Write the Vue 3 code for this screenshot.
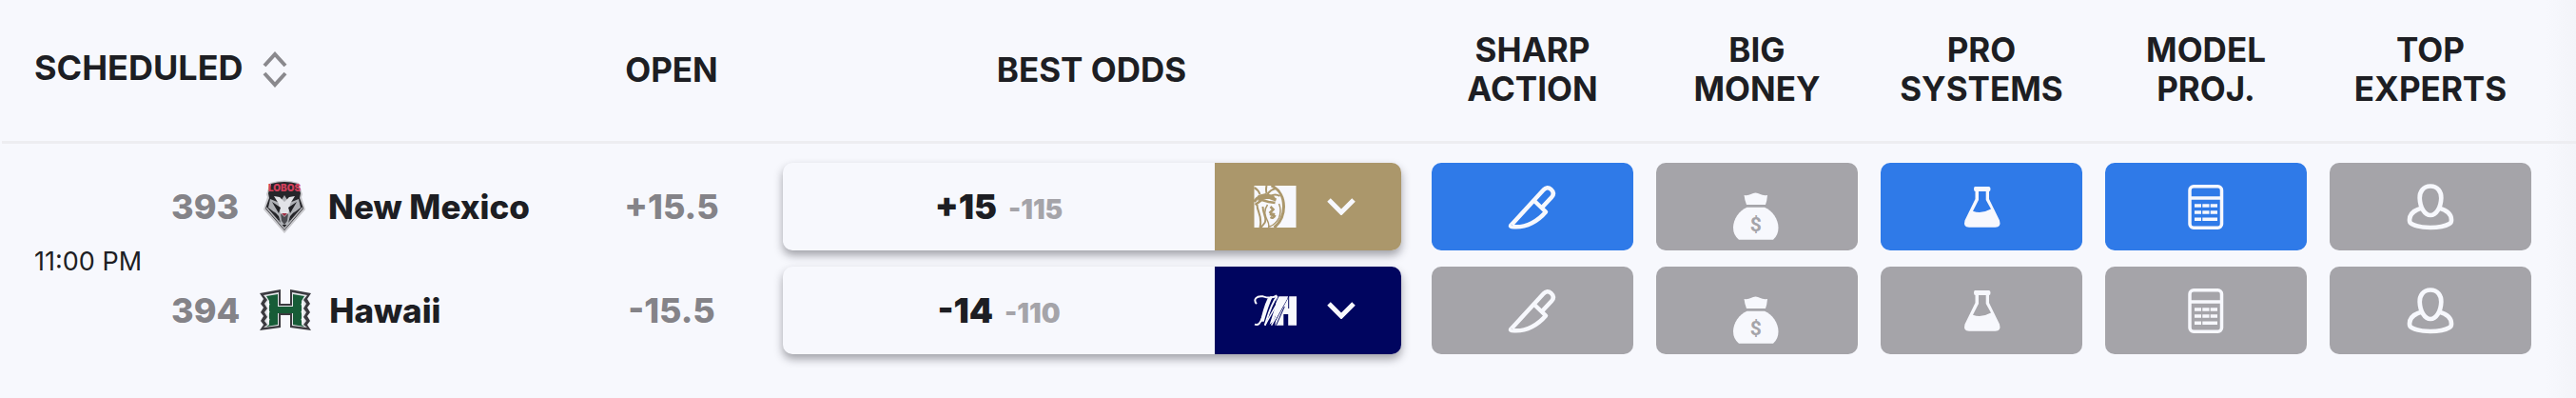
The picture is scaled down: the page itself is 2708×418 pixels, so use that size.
<script setup>
const signals = [
  { key: 'sharp', lines: ['SHARP', 'ACTION'], label: 'Sharp action' },
  { key: 'money', lines: ['BIG', 'MONEY'], label: 'Big money' },
  { key: 'systems', lines: ['PRO', 'SYSTEMS'], label: 'Pro systems' },
  { key: 'model', lines: ['MODEL', 'PROJ.'], label: 'Model projection' },
  { key: 'experts', lines: ['TOP', 'EXPERTS'], label: 'Top experts' },
]

const teams = [
  { id: 393, name: 'New Mexico', open: '+15.5', line: '+15', price: '-115', book: 'mgm', active: ['sharp', 'systems', 'model'] },
  { id: 394, name: 'Hawaii', open: '-15.5', line: '-14', price: '-110', book: 'hill', active: [] },
]
</script>

<template>
  <main class="board">
    <table class="odds">
      <colgroup>
        <col class="c-time" />
        <col />
        <col class="c-open" />
        <col class="c-best" />
        <col v-for="s in signals" :key="s.key" class="c-signal" />
        <col class="c-end" />
      </colgroup>
      <thead>
        <tr>
          <th colspan="2" scope="col" class="scheduled">
            <button type="button" class="sort">
              SCHEDULED
              <svg class="sort-icon" viewBox="0 0 26 38" aria-hidden="true">
                <path d="M2 15 13 3 24 15M2 23 13 35 24 23" fill="none" stroke="currentColor" stroke-width="4" />
              </svg>
            </button>
          </th>
          <th scope="col">OPEN</th>
          <th scope="col">BEST ODDS</th>
          <th v-for="s in signals" :key="s.key" scope="col">{{ s.lines[0] }}<br />{{ s.lines[1] }}</th>
          <td></td>
        </tr>
      </thead>
      <tbody>
        <tr v-for="(t, i) in teams" :key="t.id">
          <td v-if="i === 0" rowspan="2" class="time">11:00 PM</td>
          <td>
            <div class="team">
              <span class="number">{{ t.id }}</span>
              <span class="logo">
                <svg v-if="t.id === 393" class="lobos" viewBox="0 0 46 56" aria-hidden="true">
                  <path d="M8 3Q23-2 38 3L42 15 41 18 45 31 23 56 1 31 5 18 4 15Z" fill="#c9c9cd" />
                  <path d="M9 4Q23 0 37 4L40 14 39 19 43 30 23 53 3 30 7 19 6 14Z" fill="#26262a" />
                  <path d="M4 29 23 51 42 29" fill="none" stroke="#b4b4b8" stroke-width="1.5" />
                  <path d="M8 20 18 24 23 16 28 24 38 20 40 29 31 36 27 47H19L15 36 6 29Z" fill="#aeb0b5" />
                  <path d="M12 17 18 18 23 23 28 18 34 17 29 25 27 36H19L17 25Z" fill="#e2e3e7" />
                  <path d="M10 23 19 29 17 35ZM36 23 27 29 29 35ZM12 33 17 38 19 45ZM34 33 29 38 27 45Z" fill="#202024" />
                  <path d="M19 35 23 39 27 35 26 43 23 47 20 43Z" fill="#4b4b50" />
                  <path d="M20 35H26L23 38Z" fill="#9e2b40" />
                  <text x="23" y="12" text-anchor="middle" class="lobos-word">LOBOS</text>
                </svg>
                <svg v-else class="hawaii" viewBox="0 0 56 44" aria-hidden="true">
                  <path d="M1 4 23 0V15H33V0L55 4 51 10 54 15 51 19 54 24 51 28 54 33 51 37 55 43 33 40V27H23V40L1 43 5 37 2 33 5 28 2 24 5 19 2 15 5 10Z" fill="#3b3a3f" />
                  <path d="M5 6 21 3V17H35V3L51 6 47 11 50 15 47 20 50 24 47 29 50 33 47 37 51 40 35 38V25H21V38L5 40 9 37 6 33 9 29 6 24 9 20 6 15 9 11Z" fill="#e4e6e9" />
                  <path d="M8 7 20 5V18H36V5L48 7 45 12V37L48 39 36 37V25H20V37L8 39 11 37V12Z" fill="#175c37" />
                  <path d="M9 13Q14 15 9 19ZM9 21Q14 23 9 27ZM9 29Q14 31 9 35ZM47 13Q42 15 47 19ZM47 21Q42 23 47 27ZM47 29Q42 31 47 35Z" fill="#f7f8fd" />
                </svg>
              </span>
              <span class="name">{{ t.name }}</span>
            </div>
          </td>
          <td class="open">{{ t.open }}</td>
          <td class="best">
            <div class="best-box">
              <button type="button" class="quote">
                <span class="line">{{ t.line }}</span>
                <span class="price">{{ t.price }}</span>
              </button>
              <button type="button" class="book" :class="t.book" :aria-label="`Choose sportsbook for ${t.name}`" aria-haspopup="listbox">
                <svg v-if="t.book === 'mgm'" class="book-logo" viewBox="0 0 44 44" aria-hidden="true">
                  <path d="M0 0H44V44H0Z" fill="#f7f8fd" />
                  <g fill="none" stroke="#ab976b">
                    <path d="M18 0C27 4 31 13 31 22C31 32 27 39 21 44" stroke-width="3" />
                    <path d="M0 2Q4 4 6 9M13 0Q12 4 13 8M23 3Q17 4 14 9M27 11Q22 8 17 11" stroke-width="2" />
                    <path d="M3 20C3 28 9 31 6 44M9 22C9 30 14 34 11 39L7 44" stroke-width="2" />
                    <path d="M14 20C9 27 12 33 14 37Q16 41 15 44M26 19Q29 26 26 34Q22 41 16 43" stroke-width="1.5" />
                    <path d="M0 17Q4 10 12 11L23 15" stroke-width="3" />
                    <path d="M1 20 8 15 15 17 22 18M17 22 20 25 16 29M17 33Q20 35 22 31" stroke-width="2.5" />
                  </g>
                  <path d="M4 10 12 8 20 10 23 14 13 14 4 16ZM17 28 22 29 21 33 16 31Z" fill="#ab976b" />
                </svg>
                <svg v-else class="book-logo" viewBox="0 0 46 44" aria-hidden="true">
                  <path d="M24 7H37V20H38V7H46V38H37V26H32V38H23Z" fill="#f7f8fd" />
                  <path d="M27 6 11 39M38 6 20 39M33 18 24 38" stroke="#00055f" stroke-width="1" />
                  <path d="M3 15C-1 10 3 6 10 7Q19 10 25 6M19 7C13 14 11 30 6 36Q4 38 1 37M25 7C18 16 15 29 12 38" fill="none" stroke="#f7f8fd" stroke-width="2" />
                  <path d="M15 9C11 17 9 26 7 34L11 34C13 27 16 17 20 8ZM25 12 17 37 21 34 26 21Z" fill="#f7f8fd" />
                  <path d="M12 38 26 13M19 38 36 8" fill="none" stroke="#f7f8fd" stroke-width="1.5" />
                </svg>
                <svg class="chevron" viewBox="0 0 30 18" aria-hidden="true">
                  <path d="M2 2 15 15 28 2" fill="none" stroke="currentColor" stroke-width="5" />
                </svg>
              </button>
            </div>
          </td>
          <td v-for="s in signals" :key="s.key" class="signal-cell">
            <button type="button" class="signal" :class="{ on: t.active.includes(s.key) }" :aria-label="`${s.label}: ${t.name}`">
              <svg viewBox="0 0 48 48" class="icon" aria-hidden="true">
                <g v-if="s.key === 'sharp'" fill="none" stroke="currentColor" stroke-width="4.5" stroke-linejoin="round">
                  <path d="M2 43 35.5 6.5C38 3.5 41 3.5 43.5 5.8C46.5 8.5 46.5 11.5 44 14.3L33.5 25.5" />
                  <path d="M26 18 38 29.5C30 39 18 46 5 45.3C1 45 0 44.5 2 43" />
                </g>
                <g v-else-if="s.key === 'money'" fill="currentColor">
                  <path d="M10.5 12Q15 12.5 17.5 11Q22.5 8 27.5 11Q30 12.5 35 12Q34.5 18 33 22H13Q11 17 10.5 12Z" />
                  <path d="M13.5 24.7H32C40 28 46.5 37 46.5 46Q46.5 54 41 58.7H5Q-1 54-1 46C-1 37 5.5 28 13.5 24.7Z" />
                  <text x="22.7" y="49.5" text-anchor="middle" class="dollar">$</text>
                </g>
                <path v-else-if="s.key === 'systems'" fill="currentColor" fill-rule="evenodd" d="M17 3H32Q33.5 3 33.5 5.5T32 8V16L43 38.5Q45 45.7 38.5 45.7H11Q4.5 45.7 6.5 38.5L17.5 16V8Q16 8 16 5.5T17 3ZM21 8V17L15 28.7Q24 32 34 26.5L28.7 17V8Z" />
                <g v-else-if="s.key === 'model'" fill="none" stroke="currentColor" stroke-width="3.5">
                  <rect x="7" y="2.7" width="33.5" height="43.5" rx="4" />
                  <path d="M7 15H40" />
                  <path d="M12 23H19M20.3 23H27.5M28.7 23H36M12 30H19M20.3 30H27.5M28.7 30H36M12 37.3H19M20.3 37.3H36" />
                </g>
                <g v-else fill="none" stroke="currentColor" stroke-width="4.7">
                  <path d="M24 2.5C16 2.5 12.5 9 12.7 15C13 25 18 33 24 33S35 25 35.3 15C35.5 9 32 2.5 24 2.5Z" />
                  <path d="M15 25.5C6 28 2 33 2 38C2 40 2 41 4 42Q11 46 24 46T44 42C46 41 46 40 46 38C46 33 42 28 33 25.5" />
                </g>
              </svg>
            </button>
          </td>
          <td></td>
        </tr>
      </tbody>
    </table>
  </main>
</template>

<style>
body {
  background: #f7f8fd;
}
</style>

<style scoped>
.board {
  min-height: 100vh;
  padding-left: 2px;
  box-sizing: border-box;
  overflow-x: auto;
  background: linear-gradient(to left, #f3f4f9, #f7f8fd 32px);
  color: #1d1e23;
  font-family: Inter, "Liberation Sans", sans-serif;
}
.odds {
  width: 100%;
  min-width: 2600px;
  table-layout: fixed;
  border-collapse: separate;
  border-spacing: 0;
}
.c-time { width: 178px; }
.c-open { width: 192px; }
.c-best { width: 691px; }
.c-signal { width: 236px; }
.c-end { width: 35px; }
th,
td {
  padding: 0;
}
thead th,
thead td {
  height: 146px;
  padding-bottom: 2px;
  border-bottom: 3px solid #ededf1;
  font-size: 35px;
  font-weight: 700;
  line-height: 41px;
  text-align: center;
}
thead .scheduled {
  height: 142px;
  padding: 0 0 6px 34px;
  font-size: 36px;
  text-align: left;
}
button {
  margin: 0;
  padding: 0;
  border: 0;
  background: none;
  color: inherit;
  font: inherit;
  cursor: pointer;
}
.sort {
  display: flex;
  align-items: flex-end;
  gap: 20px;
}
.sort-icon {
  width: 26px;
  height: 38px;
  color: #8a898d;
}
tbody td {
  padding: 9px 0 25px;
}
tbody tr:first-child td {
  padding: 20px 0 8px;
}
tbody tr td.time {
  padding: 0 0 0 34px;
  font-size: 27px;
  white-space: nowrap;
}
.team {
  display: flex;
  align-items: center;
}
.number {
  min-width: 70px;
  color: #848388;
  font-size: 36px;
  font-weight: 800;
}
.logo {
  display: flex;
  justify-content: center;
  width: 56px;
  margin: 0 18px 0 20px;
}
.lobos {
  width: 46px;
  height: 56px;
}
.lobos-word {
  fill: #d2405c;
  font-size: 10px;
  font-weight: 900;
}
.hawaii {
  width: 56px;
  height: 44px;
}
.name {
  font-size: 35px;
  font-weight: 800;
  white-space: nowrap;
}
.open {
  color: #848388;
  font-size: 36px;
  font-weight: 800;
  text-align: center;
}
tbody tr td.best {
  padding-left: 21px;
  padding-right: 20px;
}
.best-box {
  display: flex;
  height: 92px;
  border-radius: 10px;
  background: #f7f8fd;
  box-shadow: 0 5px 10px rgba(30, 30, 40, 0.4);
  overflow: hidden;
}
.quote {
  display: flex;
  flex: 1;
  align-items: baseline;
  align-self: center;
  justify-content: center;
  gap: 12px;
}
.line {
  font-size: 36px;
  font-weight: 900;
}
.price {
  color: #a5a4a9;
  font-size: 28px;
  font-weight: 900;
}
.book {
  display: flex;
  align-items: center;
  width: 196px;
  padding-left: 41px;
  gap: 32px;
  color: #f7f8fd;
}
.mgm { background: #ab976b; }
.hill { background: #00055f; }
.book-logo {
  width: 45px;
  height: 44px;
}
.chevron {
  width: 30px;
  height: 18px;
}
tbody tr td.signal-cell {
  padding-left: 12px;
  padding-right: 12px;
}
.signal {
  display: flex;
  align-items: center;
  justify-content: center;
  width: 100%;
  height: 92px;
  border-radius: 10px;
  background: #a5a4a9;
  color: #f7f8fd;
}
.signal.on {
  background: #2f7ae8;
}
.icon {
  width: 48px;
  height: 48px;
  overflow: visible;
}
.dollar {
  fill: #a5a4a9;
  font-family: Roboto, sans-serif;
  font-size: 21px;
  font-weight: 700;
}
</style>
